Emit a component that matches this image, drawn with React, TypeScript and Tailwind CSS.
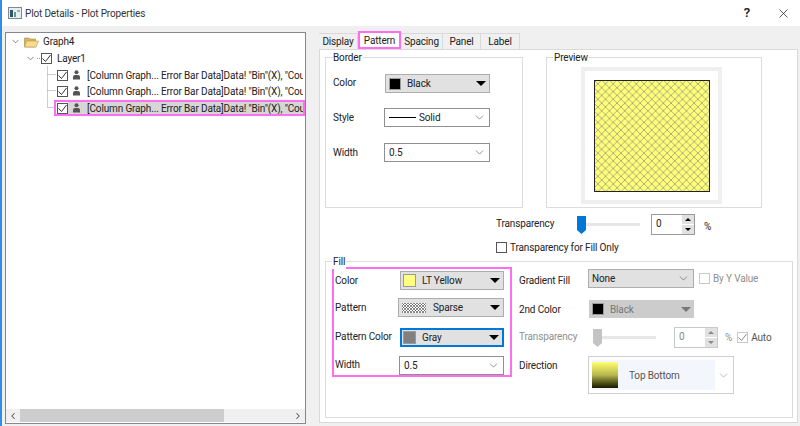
import type { ReactNode } from 'react'
import { ChevronDown, ChevronLeft, ChevronRight, X } from 'lucide-react'

const plotLabel = '[Column Graph... Error Bar Data]Data! "Bin"(X), "Count"(Y)'

function Tick({ tone = '#333333' }: { tone?: string }) {
  return (
    <svg width="9" height="9" viewBox="0 0 9 9" className="block">
      <path d="M0.5 4.5 L3.5 7.5 L8.5 1" fill="none" stroke={tone} strokeWidth="1" />
    </svg>
  )
}

function Check({ on = true }: { on?: boolean }) {
  return (
    <span className="flex h-[11px] w-[11px] shrink-0 items-center justify-center border border-[#555555] bg-white">
      {on ? <Tick /> : null}
    </span>
  )
}

function Person() {
  return (
    <svg width="7" height="10" viewBox="0 0 7 10" className="shrink-0">
      <circle cx="3.5" cy="2.3" r="2" fill="#555555" />
      <path d="M0 9.5 V7 Q0 5 2 5 H5 Q7 5 7 7 V9.5 Z" fill="#555555" />
    </svg>
  )
}

function Folder() {
  return (
    <svg width="15" height="12" viewBox="0 0 15 12" className="shrink-0">
      <path d="M0.5 2 H5 L6 3 H11.5 V11 H0.5 Z" fill="#d9b65c" stroke="#a58a45" strokeWidth="0.6" />
      <path d="M2.5 5 H14.5 L12 11 H0.5 Z" fill="#f6dc8c" stroke="#b89a50" strokeWidth="0.6" />
    </svg>
  )
}

function WindowIcon() {
  return (
    <svg width="14" height="12" viewBox="0 0 14 12">
      <rect x="0" y="0" width="14" height="12" fill="#7b8a94" />
      <rect x="1" y="1" width="12" height="10" fill="#e8eef0" />
      <rect x="2" y="3" width="3" height="7" fill="#33536b" />
      <rect x="6" y="5" width="2" height="5" fill="#5c9a8b" />
      <rect x="9" y="3" width="3" height="2" fill="#9fb2bd" />
    </svg>
  )
}

function Triangle({ tone = '#000000' }: { tone?: string }) {
  return (
    <svg width="10" height="5" viewBox="0 0 10 5" className="shrink-0">
      <path d="M0 0 H10 L5 5 Z" fill={tone} />
    </svg>
  )
}

function Chevron() {
  return <ChevronDown size={13} strokeWidth={1.3} className="shrink-0 text-[#666666]" />
}

function Swatch({ color, big = false }: { color: string; big?: boolean }) {
  return (
    <span
      className={`shrink-0 border border-[#9a9a9a] ${big ? 'h-[13px] w-[13px]' : 'h-[12px] w-[12px]'}`}
      style={{ background: color }}
    />
  )
}

function ColorCombo({ color, label, big, className }: { color: string; label: string; big?: boolean; className: string }) {
  return (
    <div className={`flex h-[19px] items-center border border-[#adadad] bg-[#e1e1e1] pl-[3px] pr-[3px] ${className}`}>
      <Swatch color={color} big={big} />
      <span className="ml-[6px] flex-1">{label}</span>
      <Triangle />
    </div>
  )
}

function PlainCombo({ children, className }: { children: ReactNode; className: string }) {
  return (
    <div className={`flex h-[19px] items-center border border-[#8f8f8f] bg-white pl-[4px] pr-[3px] ${className}`}>
      <span className="flex flex-1 items-center">{children}</span>
      <Chevron />
    </div>
  )
}

function Spin({ disabled = false }: { disabled?: boolean }) {
  const tone = disabled ? '#8a8a8a' : '#000000'
  return (
    <div className={`flex h-[21px] w-[44px] border bg-white ${disabled ? 'border-[#c8c8c8] text-[#8a8a8a]' : 'border-[#9a9a9a]'}`}>
      <span className="flex-1 pl-[4px] leading-[17px]">0</span>
      <span className="flex w-[12px] flex-col gap-[1px] bg-white">
        <span className="flex flex-1 items-center justify-center bg-[#e1e1e1]">
          <svg width="6" height="3" viewBox="0 0 6 3"><path d="M0 3 H6 L3 0 Z" fill={tone} /></svg>
        </span>
        <span className="flex flex-1 items-center justify-center bg-[#e1e1e1]">
          <svg width="6" height="3" viewBox="0 0 6 3"><path d="M0 0 H6 L3 3 Z" fill={tone} /></svg>
        </span>
      </span>
    </div>
  )
}

function Slider({ tone }: { tone: string }) {
  return (
    <div className="relative flex h-[18px] w-[63px] items-center">
      <div className="h-[3px] w-full bg-[#e7e7e7]" />
      <svg width="9" height="18" viewBox="0 0 9 18" className="absolute left-0 top-0">
        <path d="M0 0 H9 V14 L4.5 18 L0 14 Z" fill={tone} />
      </svg>
    </div>
  )
}

function Group({ title, className, children }: { title: string; className: string; children: ReactNode }) {
  return (
    <div className={`relative border border-[#dcdcdc] ${className}`}>
      <span className="absolute left-[6px] top-[-8px] bg-white px-[1px] leading-[15px]">{title}</span>
      {children}
    </div>
  )
}

function TreeRow({ selected = false }: { selected?: boolean }) {
  return (
    <div
      className={`ml-[48px] flex h-[16px] items-center whitespace-nowrap border-2 ${
        selected ? 'mt-[1px] border-[#ff6ef0]' : 'border-transparent'
      }`}
    >
      <span className="ml-[1px]">
        <Check />
      </span>
      <span className={`flex h-full flex-1 items-center overflow-hidden pl-[5px] ${selected ? 'bg-[#d6d6d6]' : ''}`}>
        <Person />
        <span className="ml-[7px]">{plotLabel}</span>
      </span>
    </div>
  )
}

const tabs = ['Display', 'Pattern', 'Spacing', 'Panel', 'Label']
const tabWidths = [39, 43, 42, 38, 39]

export default function App() {
  return (
    <div className="flex h-[426px] w-[800px] flex-col overflow-hidden border-l-2 border-[#2f8fe8] bg-[#f0f0f0] text-[10px] tracking-[-0.15px] text-[#222222] [font-family:Roboto,sans-serif]">
      <div className="flex h-[26px] shrink-0 items-center bg-white pl-[6px]">
        <WindowIcon />
        <span className="ml-[3px] text-[#333333]">Plot Details - Plot Properties</span>
        <span className="ml-auto text-[13px] font-semibold">?</span>
        <span className="ml-[26px] mr-[9px]">
          <X size={15} strokeWidth={1.2} />
        </span>
      </div>

      <div className="flex flex-1">
        <div className="relative ml-[3px] mt-[6px] flex h-[392px] w-[301px] flex-col border border-[#828790] bg-white">
          <svg width="60" height="80" className="absolute left-0 top-0" fill="none" stroke="#9a9a9a" strokeDasharray="1 1">
            <path d="M41.5 33.5 V74" />
            <path d="M41.5 41.5 H50 M41.5 57.5 H50 M41.5 74.5 H50 M31 25.5 H35" />
          </svg>
          <div className="flex h-[17px] items-center pl-[4px]">
            <ChevronDown size={11} strokeWidth={1.5} className="text-[#555555]" />
            <span className="ml-[3px]"><Folder /></span>
            <span className="ml-[4px]">Graph4</span>
          </div>
          <div className="flex h-[16px] items-center pl-[19px]">
            <ChevronDown size={11} strokeWidth={1.5} className="text-[#555555]" />
            <span className="ml-[5px]"><Check /></span>
            <span className="ml-[5px]">Layer1</span>
          </div>
          <div className="relative mt-[1px] flex flex-col">
            <TreeRow />
            <TreeRow />
            <TreeRow selected />
          </div>
          <div className="mb-[1px] mt-auto flex h-[13px] items-center bg-[#f0f0f0]">
            <span className="flex w-[14px] justify-center"><ChevronLeft size={10} strokeWidth={2.5} className="text-[#555555]" /></span>
            <span className="h-full w-[204px] bg-[#cdcdcd]" />
            <span className="ml-auto flex w-[14px] justify-center"><ChevronRight size={10} strokeWidth={2.5} className="text-[#555555]" /></span>
          </div>
        </div>

        <div className="ml-[13px] flex w-[479px] flex-col pt-[5px]">
          <div className="relative z-10 flex h-[18px] items-end">
            {tabs.map((tab, i) => (
              <span
                key={tab}
                className={`flex items-center justify-center ${
                  tab === 'Pattern'
                    ? 'h-[18px] border-2 border-[#ff6ef0] bg-white'
                    : 'h-[16px] border border-b-0 border-l-0 border-[#d9d9d9] bg-[#f0f0f0]'
                }`}
                style={{ width: tabWidths[i] }}
              >
                {tab}
              </span>
            ))}
          </div>

          <div className="flex h-[374px] flex-col border border-[#d9d9d9] bg-white pl-[5px]">
            <div className="mt-[7px] flex">
              <Group title="Border" className="h-[151px] w-[198px] pl-[7px]">
                <div className="mt-[16px] flex items-center">
                  <span className="w-[52px] pb-[3px]">Color</span>
                  <ColorCombo color="#000000" label="Black" className="w-[105px]" />
                </div>
                <div className="mt-[15px] flex items-center">
                  <span className="w-[51px]">Style</span>
                  <PlainCombo className="w-[106px]">
                    <span className="h-[1px] w-[27px] bg-black" />
                    <span className="ml-[3px]">Solid</span>
                  </PlainCombo>
                </div>
                <div className="mt-[16px] flex items-center">
                  <span className="w-[51px]">Width</span>
                  <PlainCombo className="w-[106px]">0.5</PlainCombo>
                </div>
              </Group>

              <Group title="Preview" className="ml-[23px] h-[151px] w-[216px] pl-[34px] pt-[9px]">
                <div className="flex h-[137px] w-[141px] items-center justify-center border-[4px] border-[#efefef] bg-white">
                  <svg width="116" height="112" viewBox="0 0 116 112">
                    <defs>
                      <pattern id="hatch" width="7.7" height="7.7" patternUnits="userSpaceOnUse">
                        <rect width="7.7" height="7.7" fill="#ffff78" />
                        <path d="M0 0 L7.7 7.7 M7.7 0 L0 7.7" stroke="#9c9c80" strokeWidth="0.8" />
                      </pattern>
                    </defs>
                    <rect x="0.5" y="0.5" width="115" height="111" fill="url(#hatch)" stroke="#222222" />
                  </svg>
                </div>
              </Group>
            </div>

            <div className="ml-[171px] mt-[6px] flex h-[21px] items-center">
              <span className="w-[81px] pb-[2px]">Transparency</span>
              <Slider tone="#0078d7" />
              <span className="ml-[11px]"><Spin /></span>
              <span className="ml-[9px] mt-[4px]">%</span>
            </div>
            <div className="ml-[171px] mt-[6px] flex h-[13px] items-center">
              <Check on={false} />
              <span className="ml-[3px]">Transparency for Fill Only</span>
            </div>

            <Group title="Fill" className="mt-[7px] flex h-[157px] w-[468px]">
              <div className="ml-[6px] mt-[5px] flex h-[110px] w-[180px] flex-col border-2 border-[#ff6ef0] pt-[2px]">
                <div className="flex items-center">
                  <span className="w-[66px] pl-[1px]">Color</span>
                  <ColorCombo color="#ffff80" label="LT Yellow" big className="w-[104px] !pl-[2px]" />
                </div>
                <div className="mt-[8px] flex items-center">
                  <span className="w-[64px] pl-[1px]">Pattern</span>
                  <div className="flex h-[19px] w-[106px] items-center border border-[#adadad] bg-[#e1e1e1] pl-[3px] pr-[3px]">
                    <svg width="24" height="10" viewBox="0 0 24 10" className="shrink-0">
                      <defs>
                        <pattern id="mini" width="3" height="3" patternUnits="userSpaceOnUse">
                          <rect width="3" height="3" fill="#ffffff" />
                          <path d="M0 0 L3 3 M3 0 L0 3" stroke="#555555" strokeWidth="0.7" />
                        </pattern>
                      </defs>
                      <rect width="24" height="10" fill="url(#mini)" />
                    </svg>
                    <span className="ml-[7px] flex-1">Sparse</span>
                    <Triangle />
                  </div>
                </div>
                <div className="mt-[11px] flex items-center">
                  <span className="w-[66px] whitespace-nowrap pb-[3px] pl-[1px]">Pattern Color</span>
                  <ColorCombo color="#808080" label="Gray" big className="w-[104px] !border-2 !border-[#0078d7] !pl-[1px]" />
                </div>
                <div className="mt-[9px] flex items-center">
                  <span className="w-[65px] pb-[3px] pl-[1px]">Width</span>
                  <PlainCombo className="w-[105px]">0.5</PlainCombo>
                </div>
              </div>

              <div className="ml-[7px] mt-[7px] flex flex-col">
                <div className="flex h-[19px] items-center">
                  <span className="w-[69px] whitespace-nowrap pt-[3px]">Gradient Fill</span>
                  <div className="flex h-[19px] w-[106px] items-center border border-[#adadad] bg-[#e1e1e1] pl-[3px] pr-[3px]">
                    <span className="flex-1">None</span>
                    <Chevron />
                  </div>
                  <span className="ml-[5px] h-[11px] w-[11px] border border-[#c8c8c8] bg-white" />
                  <span className="ml-[3px] text-[#8f8f8f]">By Y Value</span>
                </div>
                <div className="mt-[12px] flex h-[18px] items-center">
                  <span className="w-[70px]">2nd Color</span>
                  <div className="flex h-[18px] w-[105px] items-center bg-[#cccccc] pl-[3px] pr-[3px] text-[#777777]">
                    <Swatch color="#000000" />
                    <span className="ml-[6px] flex-1">Black</span>
                    <Triangle tone="#777777" />
                  </div>
                </div>
                <div className="mt-[9px] flex h-[21px] items-center text-[#8f8f8f]">
                  <span className="w-[74px] pb-[3px]">Transparency</span>
                  <Slider tone="#c4c4c4" />
                  <span className="ml-[18px]"><Spin disabled /></span>
                  <span className="ml-[7px]">%</span>
                  <span className="ml-[5px] flex h-[11px] w-[11px] items-center justify-center border border-[#c8c8c8] bg-white">
                    <Tick tone="#8a8a8a" />
                  </span>
                  <span className="ml-[3px] text-[#555555]">Auto</span>
                </div>
                <div className="mt-[8px] flex">
                  <span className="w-[69px] pt-[2px]">Direction</span>
                  <div className="flex h-[38px] w-[146px] items-center border border-[#cfcfcf] bg-white p-[3px]">
                    <div className="flex h-full w-[126px] items-center bg-[#f3f6fc]">
                      <span className="h-[26px] w-[26px] shrink-0 bg-gradient-to-b from-[#ffff70] via-[#b8b850] to-[#1a1a00]" />
                      <span className="ml-[11px] text-[#555555]">Top Bottom</span>
                    </div>
                    <span className="ml-[2px] opacity-60"><Chevron /></span>
                  </div>
                </div>
              </div>
            </Group>
          </div>
        </div>
      </div>
    </div>
  )
}
